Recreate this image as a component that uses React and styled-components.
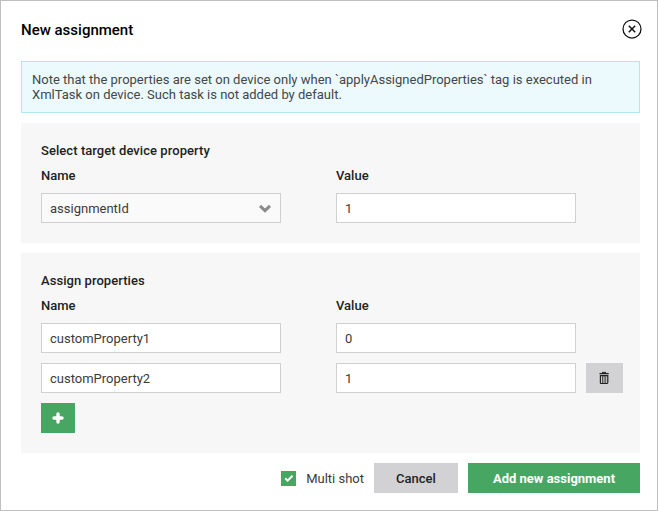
import React from "react";
import styled, { createGlobalStyle } from "styled-components";

const GlobalStyle = createGlobalStyle`
  * { box-sizing: border-box; }
  body { margin: 0; background: #fff; }
  body, input, button { font-family: Roboto, "Liberation Sans", sans-serif; font-size: 13px; letter-spacing: 0; }
`;

const Dialog = styled.div`
  width: 658px;
  height: 511px;
  border: 1px solid #bfbfbf;
  padding: 0 17px 0 20px;
  background: #fff;
  color: #3b3b3b;
`;

const Header = styled.header`
  display: flex;
  align-items: center;
  justify-content: space-between;
  height: 60px;
  padding-bottom: 4px;
`;

const Title = styled.h1`
  margin: 0;
  padding-top: 2px;
  font-size: 15px;
  font-weight: 500;
  line-height: 20px;
  color: #000;
`;

const CloseButton = styled.button`
  display: flex;
  border: 0;
  padding: 0;
  margin: 0 -2px 1px 0;
  background: none;
  color: #111;
`;

const Notice = styled.p`
  height: 52px;
  margin: 0;
  padding: 10px;
  border: 1px solid #b3e7f0;
  background: #ecfafe;
  line-height: 15px;
  color: #42474a;
`;

const Section = styled.section`
  height: ${(p) => p.$height}px;
  margin-top: 10px;
  padding: 20px 17px 0 20px;
  background: #f7f7f7;
`;

const SectionTitle = styled.h2`
  margin: 0 0 10px;
  font-size: 13px;
  font-weight: 500;
  line-height: 15px;
  letter-spacing: 0.06px;
  color: #222;
`;

const Row = styled.div`
  display: flex;
  align-items: center;
  margin-bottom: 10px;
`;

const Label = styled.div`
  flex: 0 0 295px;
  font-weight: 500;
  line-height: 15px;
  color: #222;

  &:last-child {
    flex-basis: 240px;
  }
`;

const Field = styled.input`
  width: 240px;
  height: 30px;
  margin: 0 ${(p) => p.$gap || 0}px 0 0;
  padding: 0 8px;
  border: 1px solid #d0d0d0;
  border-radius: 0;
  outline: 0;
  background: #fff;
  color: #3b3b3b;
`;

const Select = styled.button`
  display: flex;
  align-items: center;
  justify-content: space-between;
  width: 240px;
  height: 30px;
  margin: 0 55px 0 0;
  padding: 0 8px;
  border: 1px solid #d0d0d0;
  background: #fafafa;
  color: #3b3b3b;
`;

const Button = styled.button`
  display: flex;
  align-items: center;
  justify-content: center;
  width: ${(p) => p.$width}px;
  height: 30px;
  padding: 0;
  border: 0;
  background: ${(p) => (p.$primary ? "#48a663" : "#d2d2d4")};
  color: ${(p) => (p.$primary ? "#fff" : "#222")};
  font-weight: ${(p) => (p.$primary ? 700 : 500)};
`;

const Footer = styled.footer`
  display: flex;
  align-items: center;
  justify-content: flex-end;
  gap: 10px;
  margin-top: 10px;
`;

const CheckLabel = styled.div`
  display: flex;
  align-items: center;
  gap: 10px;
`;

const CheckBox = styled.span`
  display: flex;
  width: 15px;
  height: 15px;
  background: #48a663;
`;

function CloseIcon() {
  return (
    <svg width="20" height="20" viewBox="0 0 20 20" fill="none" stroke="currentColor">
      <circle cx="10" cy="10" r="9" strokeWidth="1.25" />
      <path d="M6.8 6.8l6.4 6.4M13.2 6.8l-6.4 6.4" strokeWidth="1.5" />
    </svg>
  );
}

function ChevronIcon() {
  return (
    <svg width="14" height="10" viewBox="0 0 14 10" fill="none" stroke="#8b8b8b" strokeWidth="3">
      <path d="M2 2.9l5 4.8 5-4.8" />
    </svg>
  );
}

function TrashIcon() {
  return (
    <svg width="11" height="14" viewBox="0 0 11 14" fill="none" stroke="#222">
      <path d="M3 1.4h4" />
      <path d="M.5 2.6h9.2" strokeWidth="1.3" />
      <path d="M1.4 4.6h7.4v6.9q0 1-1 1h-5.4q-1 0-1-1z" strokeWidth="1.2" />
      <path d="M3.5 5v7M5.1 5v7M6.7 5v7" strokeWidth=".7" />
    </svg>
  );
}

function PlusIcon() {
  return (
    <svg width="12" height="12" viewBox="0 0 12 12" stroke="#fff" strokeWidth="3.4" strokeLinecap="round">
      <path d="M6 2v8M2 6h8" />
    </svg>
  );
}

function CheckIcon() {
  return (
    <svg width="15" height="15" viewBox="0 0 15 15" fill="none" stroke="#fff" strokeWidth="2">
      <path d="M4.2 7.3l2.4 2.4 4.9-4.9" />
    </svg>
  );
}

function ColumnLabels() {
  return (
    <Row>
      <Label>Name</Label>
      <Label>Value</Label>
    </Row>
  );
}

export default function App() {
  return (
    <>
      <GlobalStyle />
      <Dialog role="dialog">
        <Header>
          <Title>New assignment</Title>
          <CloseButton aria-label="Close"><CloseIcon /></CloseButton>
        </Header>
        <Notice>
          Note that the properties are set on device only when `applyAssignedProperties` tag is executed in XmlTask on device. Such task is not added by default.
        </Notice>
        <Section $height={120}>
          <SectionTitle>Select target device property</SectionTitle>
          <ColumnLabels />
          <Row>
            <Select>assignmentId<ChevronIcon /></Select>
            <Field defaultValue="1" />
          </Row>
        </Section>
        <Section $height={200}>
          <SectionTitle>Assign properties</SectionTitle>
          <ColumnLabels />
          <Row>
            <Field defaultValue="customProperty1" $gap={55} />
            <Field defaultValue="0" />
          </Row>
          <Row>
            <Field defaultValue="customProperty2" $gap={55} />
            <Field defaultValue="1" $gap={10} />
            <Button $width={37} aria-label="Delete"><TrashIcon /></Button>
          </Row>
          <Button $primary $width={34} aria-label="Add"><PlusIcon /></Button>
        </Section>
        <Footer>
          <CheckLabel>
            <CheckBox><CheckIcon /></CheckBox>
            Multi shot
          </CheckLabel>
          <Button $width={84}>Cancel</Button>
          <Button $primary $width={172}>Add new assignment</Button>
        </Footer>
      </Dialog>
    </>
  );
}
